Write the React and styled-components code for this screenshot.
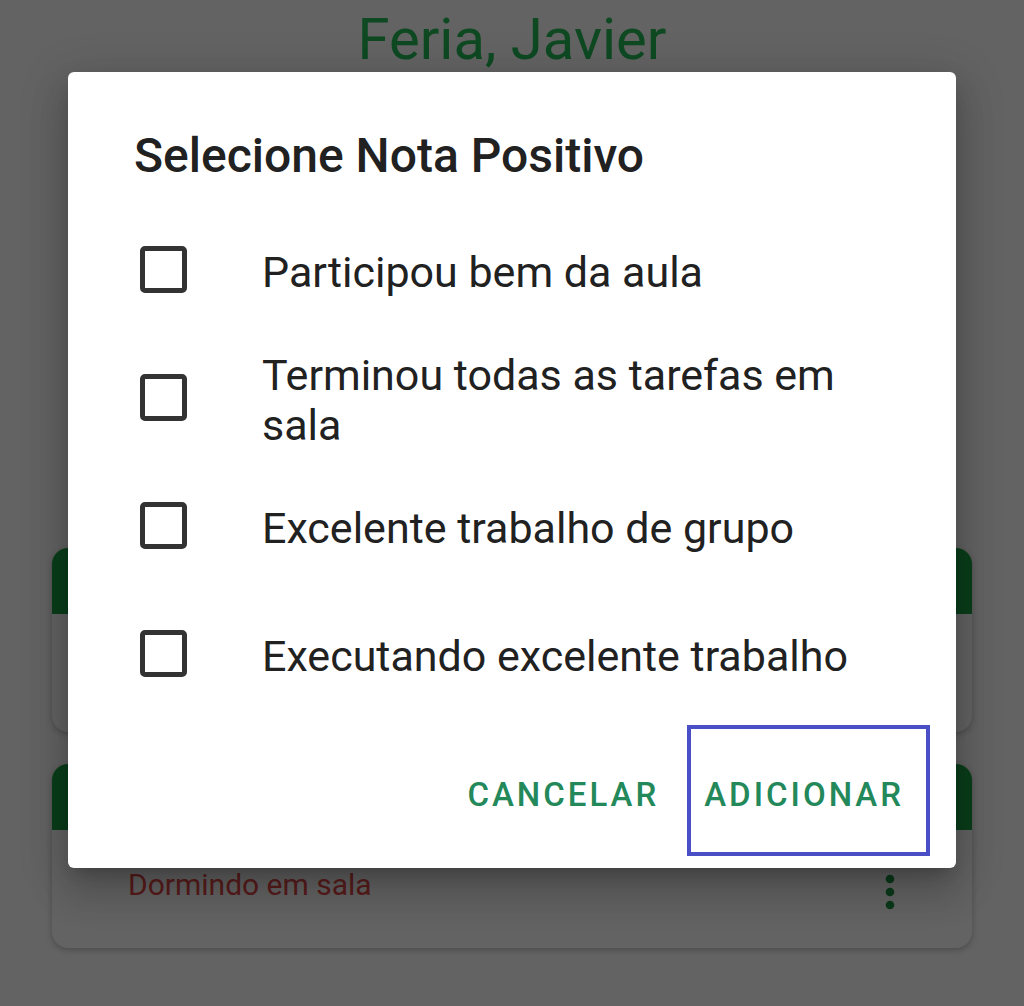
import styled, { createGlobalStyle } from "styled-components";
import { MdMoreVert } from "react-icons/md";

const GlobalStyle = createGlobalStyle`
  body {
    margin: 0;
    background: #ffffff;
    font-family: Roboto, "Liberation Sans", sans-serif;
  }
`;

const Screen = styled.div`
  position: relative;
  width: 1024px;
  height: 1006px;
  overflow: hidden;
  background: #fefefe;
`;

const StudentName = styled.h1`
  margin: 0;
  padding-top: 5px;
  text-align: center;
  font-size: 58px;
  font-weight: 400;
  line-height: 68px;
  color: #24bd58;
`;

const NoteList = styled.div`
  display: flex;
  flex-direction: column;
  gap: 32px;
  margin: 475px 52px 0;
`;

const NoteCard = styled.div`
  border-radius: 16px;
  overflow: hidden;
  background: #ffffff;
  box-shadow: 0 2px 6px rgba(0, 0, 0, 0.25);
`;

const NoteHeader = styled.div`
  height: 66px;
  background: #1b9f45;
`;

const NoteBody = styled.div`
  height: 118px;
  box-sizing: border-box;
  display: flex;
  align-items: center;
  justify-content: space-between;
  padding: 0 56px 10px 76px;
  font-size: 30px;
  color: #e44a4a;
`;

const MoreIcon = styled(MdMoreVert)`
  color: #1d9743;
  margin-top: 16px;
`;

const Scrim = styled.div`
  position: absolute;
  inset: 0;
  background: rgba(0, 0, 0, 0.61);
`;

const Dialog = styled.div`
  position: absolute;
  top: 72px;
  left: 68px;
  width: 888px;
  box-sizing: border-box;
  padding-top: 56px;
  background: #ffffff;
  border-radius: 6px;
  box-shadow: 0 11px 15px -7px rgba(0, 0, 0, 0.2),
    0 24px 38px 3px rgba(0, 0, 0, 0.14), 0 9px 46px 8px rgba(0, 0, 0, 0.12);
`;

const DialogTitle = styled.h2`
  margin: 0 0 24px;
  padding: 0 66px;
  font-size: 48px;
  font-weight: 500;
  line-height: 56px;
  color: #212121;
`;

const Options = styled.div`
  display: flex;
  flex-direction: column;
`;

const Option = styled.label`
  min-height: 128px;
  display: flex;
  align-items: center;
  gap: 75px;
  padding: 0 66px 0 72px;
  font-size: 43px;
  line-height: 50px;
  color: #212121;
  cursor: pointer;
`;

const Box = styled.span`
  flex: none;
  width: 47px;
  height: 47px;
  box-sizing: border-box;
  border: 5px solid #333333;
  border-radius: 5px;
  margin-top: -5px;
`;

const Actions = styled.div`
  display: flex;
  justify-content: flex-end;
  gap: 2px;
  padding: 5px 26px 12px;
`;

const ActionButton = styled.button`
  height: 131px;
  box-sizing: border-box;
  padding: 8px 22px 0 13px;
  border: 4px solid ${(p) => (p.$focused ? "#4a4fc6" : "transparent")};
  background: none;
  font-family: Roboto, "Liberation Sans", sans-serif;
  font-size: 33px;
  font-weight: 500;
  letter-spacing: 3px;
  color: #23885a;
  cursor: pointer;
`;

const options = [
  "Participou bem da aula",
  "Terminou todas as tarefas em sala",
  "Excelente trabalho de grupo",
  "Executando excelente trabalho",
];

export default function App() {
  return (
    <Screen>
      <GlobalStyle />
      <StudentName>Feria, Javier</StudentName>
      <NoteList>
        <NoteCard>
          <NoteHeader />
          <NoteBody />
        </NoteCard>
        <NoteCard>
          <NoteHeader />
          <NoteBody>
            <span>Dormindo em sala</span>
            <MoreIcon size={52} />
          </NoteBody>
        </NoteCard>
      </NoteList>
      <Scrim />
      <Dialog>
        <DialogTitle>Selecione Nota Positivo</DialogTitle>
        <Options>
          {options.map((text) => (
            <Option key={text}>
              <Box />
              <span>{text}</span>
            </Option>
          ))}
        </Options>
        <Actions>
          <ActionButton>CANCELAR</ActionButton>
          <ActionButton $focused>ADICIONAR</ActionButton>
        </Actions>
      </Dialog>
    </Screen>
  );
}
